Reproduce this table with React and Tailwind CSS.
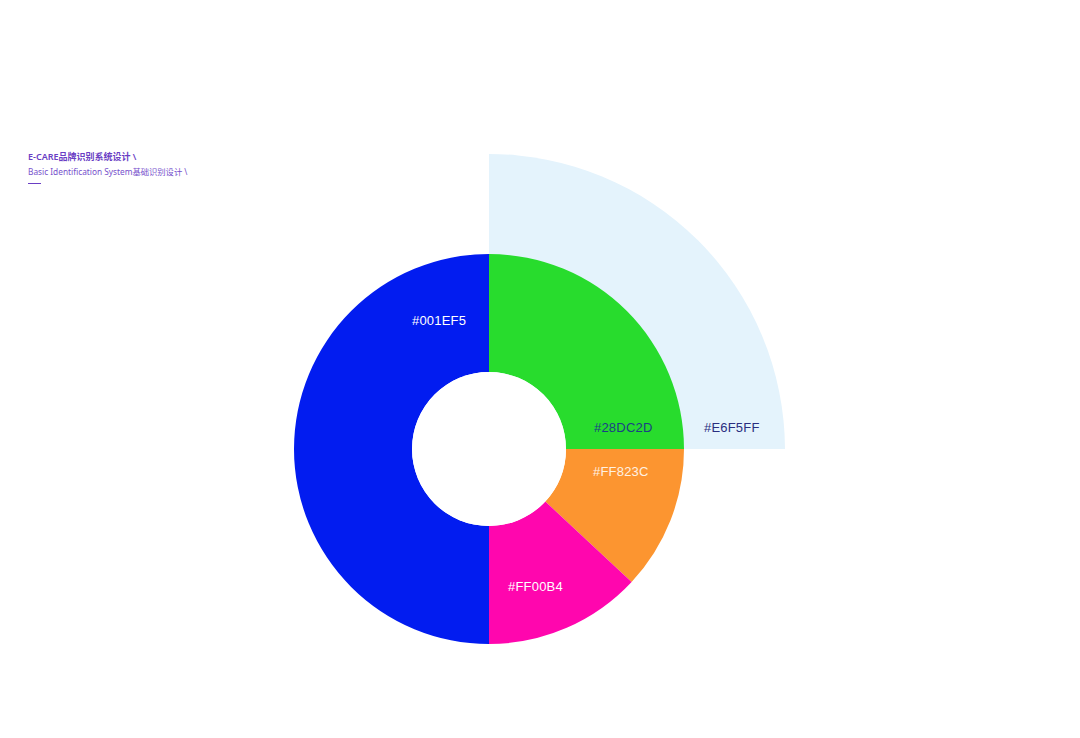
import React from 'react';

const segments = [
  // green quadrant, top to right
  { d: 'M195 100 A195 195 0 0 1 390 295 L272 295 A77 77 0 0 0 195 218 Z', fill: '#28DC2D' },
  { d: 'M390 295 A195 195 0 0 1 337.6 428 L251.3 347.5 A77 77 0 0 0 272 295 Z', fill: '#FC9530' },
  { d: 'M337.6 428 A195 195 0 0 1 195 490 L195 372 A77 77 0 0 0 251.3 347.5 Z', fill: '#FF06AE' },
  { d: 'M195 490 A195 195 0 0 1 195 100 L195 218 A77 77 0 0 0 195 372 Z', fill: '#021CF0' },
];

const labels = [
  { text: '#001EF5', x: 118, y: 171, fill: '#ffffff' },
  { text: '#28DC2D', x: 300, y: 278, fill: '#1b3f86' },
  { text: '#E6F5FF', x: 410, y: 278, fill: '#2a2e80' },
  { text: '#FF823C', x: 299, y: 322, fill: '#fff1e2' },
  { text: '#FF00B4', x: 214, y: 437, fill: '#ffffff' },
];

const ColorWheel = () => (
  <svg width="492" height="491" viewBox="0 0 492 491" className="block shrink-0">
    <path d="M195 295 L195 0 A296 296 0 0 1 491 295 Z" fill="#E4F3FC" />
    {segments.map((s, i) => (
      <path key={i} d={s.d} fill={s.fill} />
    ))}
    <circle cx="195" cy="295" r="77" fill="#ffffff" />
    {labels.map((l) => (
      <text
        key={l.text}
        x={l.x}
        y={l.y}
        fill={l.fill}
        fontSize="13"
        letterSpacing="0.2"
        fontFamily="'Liberation Sans', Arial, sans-serif"
      >
        {l.text}
      </text>
    ))}
  </svg>
);

export default function App() {
  return (
    <div className="w-[1080px] h-[738px] bg-white overflow-hidden font-['Noto_Sans','Noto_Sans_CJK_SC',sans-serif]">
      <div className="flex items-start pt-[150px] pl-[28px]">
        {/* Title block */}
        <div className="w-[266px] shrink-0">
          <p className="text-[9px] leading-[14px] font-semibold text-[#6a3ec4] whitespace-nowrap">
            E-CARE品牌识别系统设计 \
          </p>
          <p className="text-[8.3px] leading-[12px] mt-[2px] text-[#7650cc] whitespace-nowrap">
            Basic Identification System基础识别设计 \
          </p>
          <div className="w-[13px] h-px bg-[#6a3ec4] mt-[5px]" />
        </div>
        <div className="mt-[4px]">
          <ColorWheel />
        </div>
      </div>
    </div>
  );
}
